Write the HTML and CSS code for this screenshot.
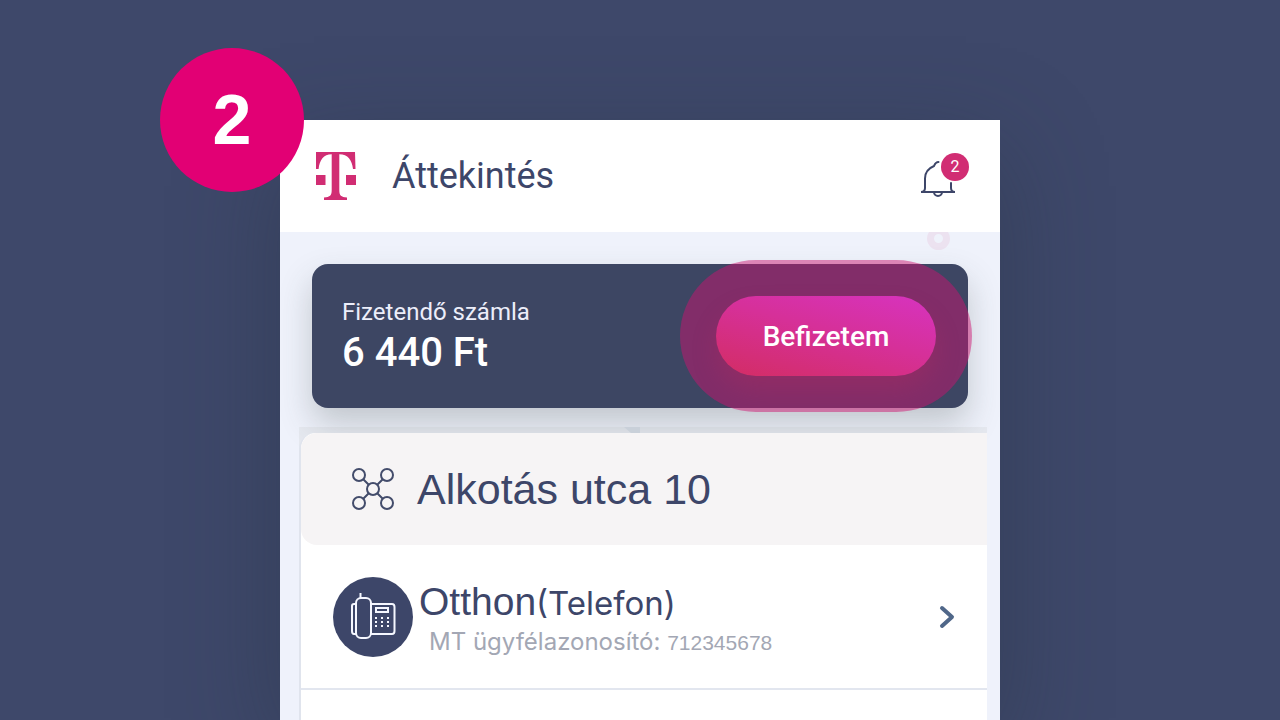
FILE: index.html
```html
<!DOCTYPE html>
<html lang="hu">
<head>
<meta charset="utf-8">
<meta name="viewport" content="width=device-width, initial-scale=1">
<title>Áttekintés</title>
<link rel="stylesheet" href="styles.css">
</head>
<body>
<main class="phone">
  <div class="step">2</div>
  <header class="topbar">
    <svg class="logo" viewBox="0 0 40 48" aria-hidden="true">
      <path d="M0 0H39L39.500 17H37C36 8 32 2.500 23.300 2.300V38C23.300 43.500 25 45 31 45.500V48H8V45.500C14 45 15.700 43.500 15.700 38V2.300C7.500 2.500 3.500 8 2.600 17H0ZM0 23H9.500V33H0ZM30 23H40V33H30Z"/>
    </svg>
    <h1 class="title">Áttekintés</h1>
    <button class="bell" type="button" aria-label="Értesítések">
      <svg class="bell-icon" viewBox="0 0 36 38" aria-hidden="true">
        <path d="M18.500 2C16 2 15 3.500 14 6C8 8.500 5 12.500 5 18.500V28C5 31 4 32 1 32H35C32 32 31 31 31 28V23M14 32A4 4 0 0 0 22 32"/>
      </svg>
      <span class="count">2</span>
    </button>
  </header>

  <div class="content">
    <span class="ring"></span>
    <section class="bill">
      <div class="bill-text">
        <span class="bill-label">Fizetendő számla</span>
        <strong class="bill-sum">6 440 Ft</strong>
      </div>
      <button class="pay" type="button">Befizetem</button>
    </section>

    <section class="services">
      <svg class="notch" viewBox="0 0 16 6" aria-hidden="true"><path d="M0 0H16V6H7Z"/></svg>
      <h2 class="address">
        <svg class="nodes" viewBox="0 0 44 44" aria-hidden="true">
          <path d="M12.500 12.500L17.500 17.500M31.500 12.500L26.500 17.500M12.500 31.500L17.500 26.500M31.500 31.500L26.500 26.500"/>
          <circle cx="22" cy="22" r="6"/><circle cx="8" cy="8" r="6"/><circle cx="36" cy="8" r="6"/><circle cx="8" cy="36" r="6"/><circle cx="36" cy="36" r="6"/>
        </svg>
        Alkotás utca 10
      </h2>
      <a class="service" href="#">
        <svg class="phone-icon" viewBox="0 0 80 80" aria-hidden="true">
          <circle class="disc" cx="40" cy="40" r="40"/>
          <rect x="23" y="21" width="15" height="40" rx="5"/>
          <path d="M27.500 16V21M23 27H21Q19 27 19 29V54Q19 57 21 57H23M38 27H59Q61.500 27 61.500 30V54Q61.500 57 59 57H38M43 31H55V35H43Z"/>
          <path class="keys" d="M42 41H56M42 45H56M42 49H56"/>
        </svg>
        <span class="service-text">
          <span class="service-name">Otthon<span class="kind">(Telefon)</span></span>
          <span class="service-id">MT ügyfélazonosító: <span class="number">712345678</span></span>
        </span>
        <svg class="chevron" viewBox="0 0 16 24" aria-hidden="true"><path d="M3 3L13 12L3 21"/></svg>
      </a>
    </section>
  </div>
</main>
</body>
</html>
```
FILE: styles.css
```css
* { box-sizing: border-box; }
body {
  margin: 0;
  min-height: 100vh;
  padding: 120px 24px 0;
  display: flex;
  background: #3e486a;
  color: #3d4669;
  font-family: Roboto, sans-serif;
}
button { border: 0; padding: 0; font-family: inherit; cursor: pointer; }
h1, h2 { margin: 0; font-weight: 400; }
svg { flex: none; }

.phone {
  position: relative;
  width: 100%;
  max-width: 720px;
  margin: 0 auto;
  display: flex;
  flex-direction: column;
  background: #eff2fb;
  box-shadow: 0 32px 96px rgba(39, 50, 66, .45);
}
.step {
  position: absolute;
  top: -72px;
  left: -120px;
  width: 144px;
  height: 144px;
  display: grid;
  place-items: center;
  border-radius: 50%;
  background: #e20074;
  color: #fff;
  font: 700 70px/80px "Liberation Sans", sans-serif;
}
.topbar {
  display: flex;
  align-items: center;
  height: 112px;
  padding: 0 36px;
  background: #fff;
}
.logo { width: 40px; height: 48px; fill: #d12d73; }
.title { margin-left: 36px; font-size: 36px; line-height: 48px; }
.bell {
  position: relative;
  width: 36px;
  height: 38px;
  margin: 6px 8px 0 auto;
  background: none;
}
.bell-icon { display: block; fill: none; stroke: #3d4669; stroke-width: 2; stroke-linecap: round; }
.count {
  position: absolute;
  top: -7px;
  right: -13px;
  width: 28px;
  height: 28px;
  border-radius: 50%;
  background: #d12d73;
  color: #fff;
  font-size: 16px;
  line-height: 28px;
  text-align: center;
}
.content {
  position: relative;
  z-index: 0;
  flex: 1;
  display: flex;
  flex-direction: column;
  gap: 25px;
  padding-top: 32px;
  overflow: hidden;
}
.ring {
  position: absolute;
  top: -5px;
  right: 50px;
  width: 23px;
  height: 23px;
  border: 7px solid #ece2f0;
  border-radius: 50%;
}
.bill {
  position: relative;
  z-index: 0;
  display: flex;
  align-items: center;
  justify-content: space-between;
  min-height: 144px;
  margin: 0 32px;
  padding: 0 32px 0 30px;
  border-radius: 16px;
  background: #3d4663;
  color: #fff;
  box-shadow: 0 16px 32px rgba(61, 70, 70, .25);
}
.bill-text { display: flex; flex-direction: column; padding-top: 2px; }
.bill-label { color: #eceefa; font-size: 24px; line-height: 32px; }
.bill-sum { font-size: 40px; line-height: 50px; font-weight: 500; }
.pay {
  position: relative;
  width: 220px;
  height: 80px;
  border-radius: 40px;
  background: linear-gradient(15deg, #d32d68 5%, #d63099 55%, #d733c0);
  color: #fff;
  font-size: 28px;
  font-weight: 500;
  box-shadow: 0 14px 24px rgba(190, 45, 90, .25);
}
.pay::before {
  content: "";
  position: absolute;
  inset: -36px;
  z-index: -1;
  border-radius: 76px;
  background: rgba(206, 18, 112, .48);
}
.services {
  flex: 1;
  position: relative;
  margin: 0 13px 0 19px;
  border-left: 2px solid #e0e4ed;
  background: #fff;
  border-radius: 16px 0 0 0;
}
.services::before {
  content: "";
  position: absolute;
  z-index: -1;
  top: -6px;
  left: -2px;
  right: 0;
  height: 24px;
  background: #e6e9f0;
}
.notch {
  position: absolute;
  top: -6px;
  left: 323px;
  width: 16px;
  height: 6px;
  fill: #c9d0d9;
}
.address {
  display: flex;
  align-items: center;
  gap: 22px;
  height: 112px;
  padding: 0 50px;
  border-radius: 16px 0 0 16px;
  background: #f6f4f5;
  font: 400 43px/56px "Liberation Sans", sans-serif;
}
.nodes { width: 44px; height: 44px; fill: none; stroke: #434c6b; stroke-width: 2; }
.service {
  display: flex;
  align-items: center;
  min-height: 145px;
  padding: 0 32px;
  border-bottom: 2px solid #e2e6ef;
  color: inherit;
  text-decoration: none;
}
.phone-icon { width: 80px; height: 80px; fill: none; stroke: #f5f7ff; stroke-width: 2; }
.disc { fill: #3d4669; stroke: none; }
.keys { stroke-dasharray: 2 4; }
.service-text { display: flex; flex-direction: column; padding: 6px 0 0 6px; }
.service-name { font: 400 39px/44px "Liberation Sans", sans-serif; }
.kind { font-family: Inter, sans-serif; font-size: 33px; }
.service-id { padding-left: 10px; color: #a3a7b4; font: 400 24px/34px Inter, sans-serif; }
.number { font-family: "Liberation Sans", sans-serif; font-size: 21px; }
.chevron {
  width: 16px;
  height: 24px;
  margin-left: auto;
  fill: none;
  stroke: #506789;
  stroke-width: 4;
  stroke-linecap: round;
  stroke-linejoin: round;
}
```
